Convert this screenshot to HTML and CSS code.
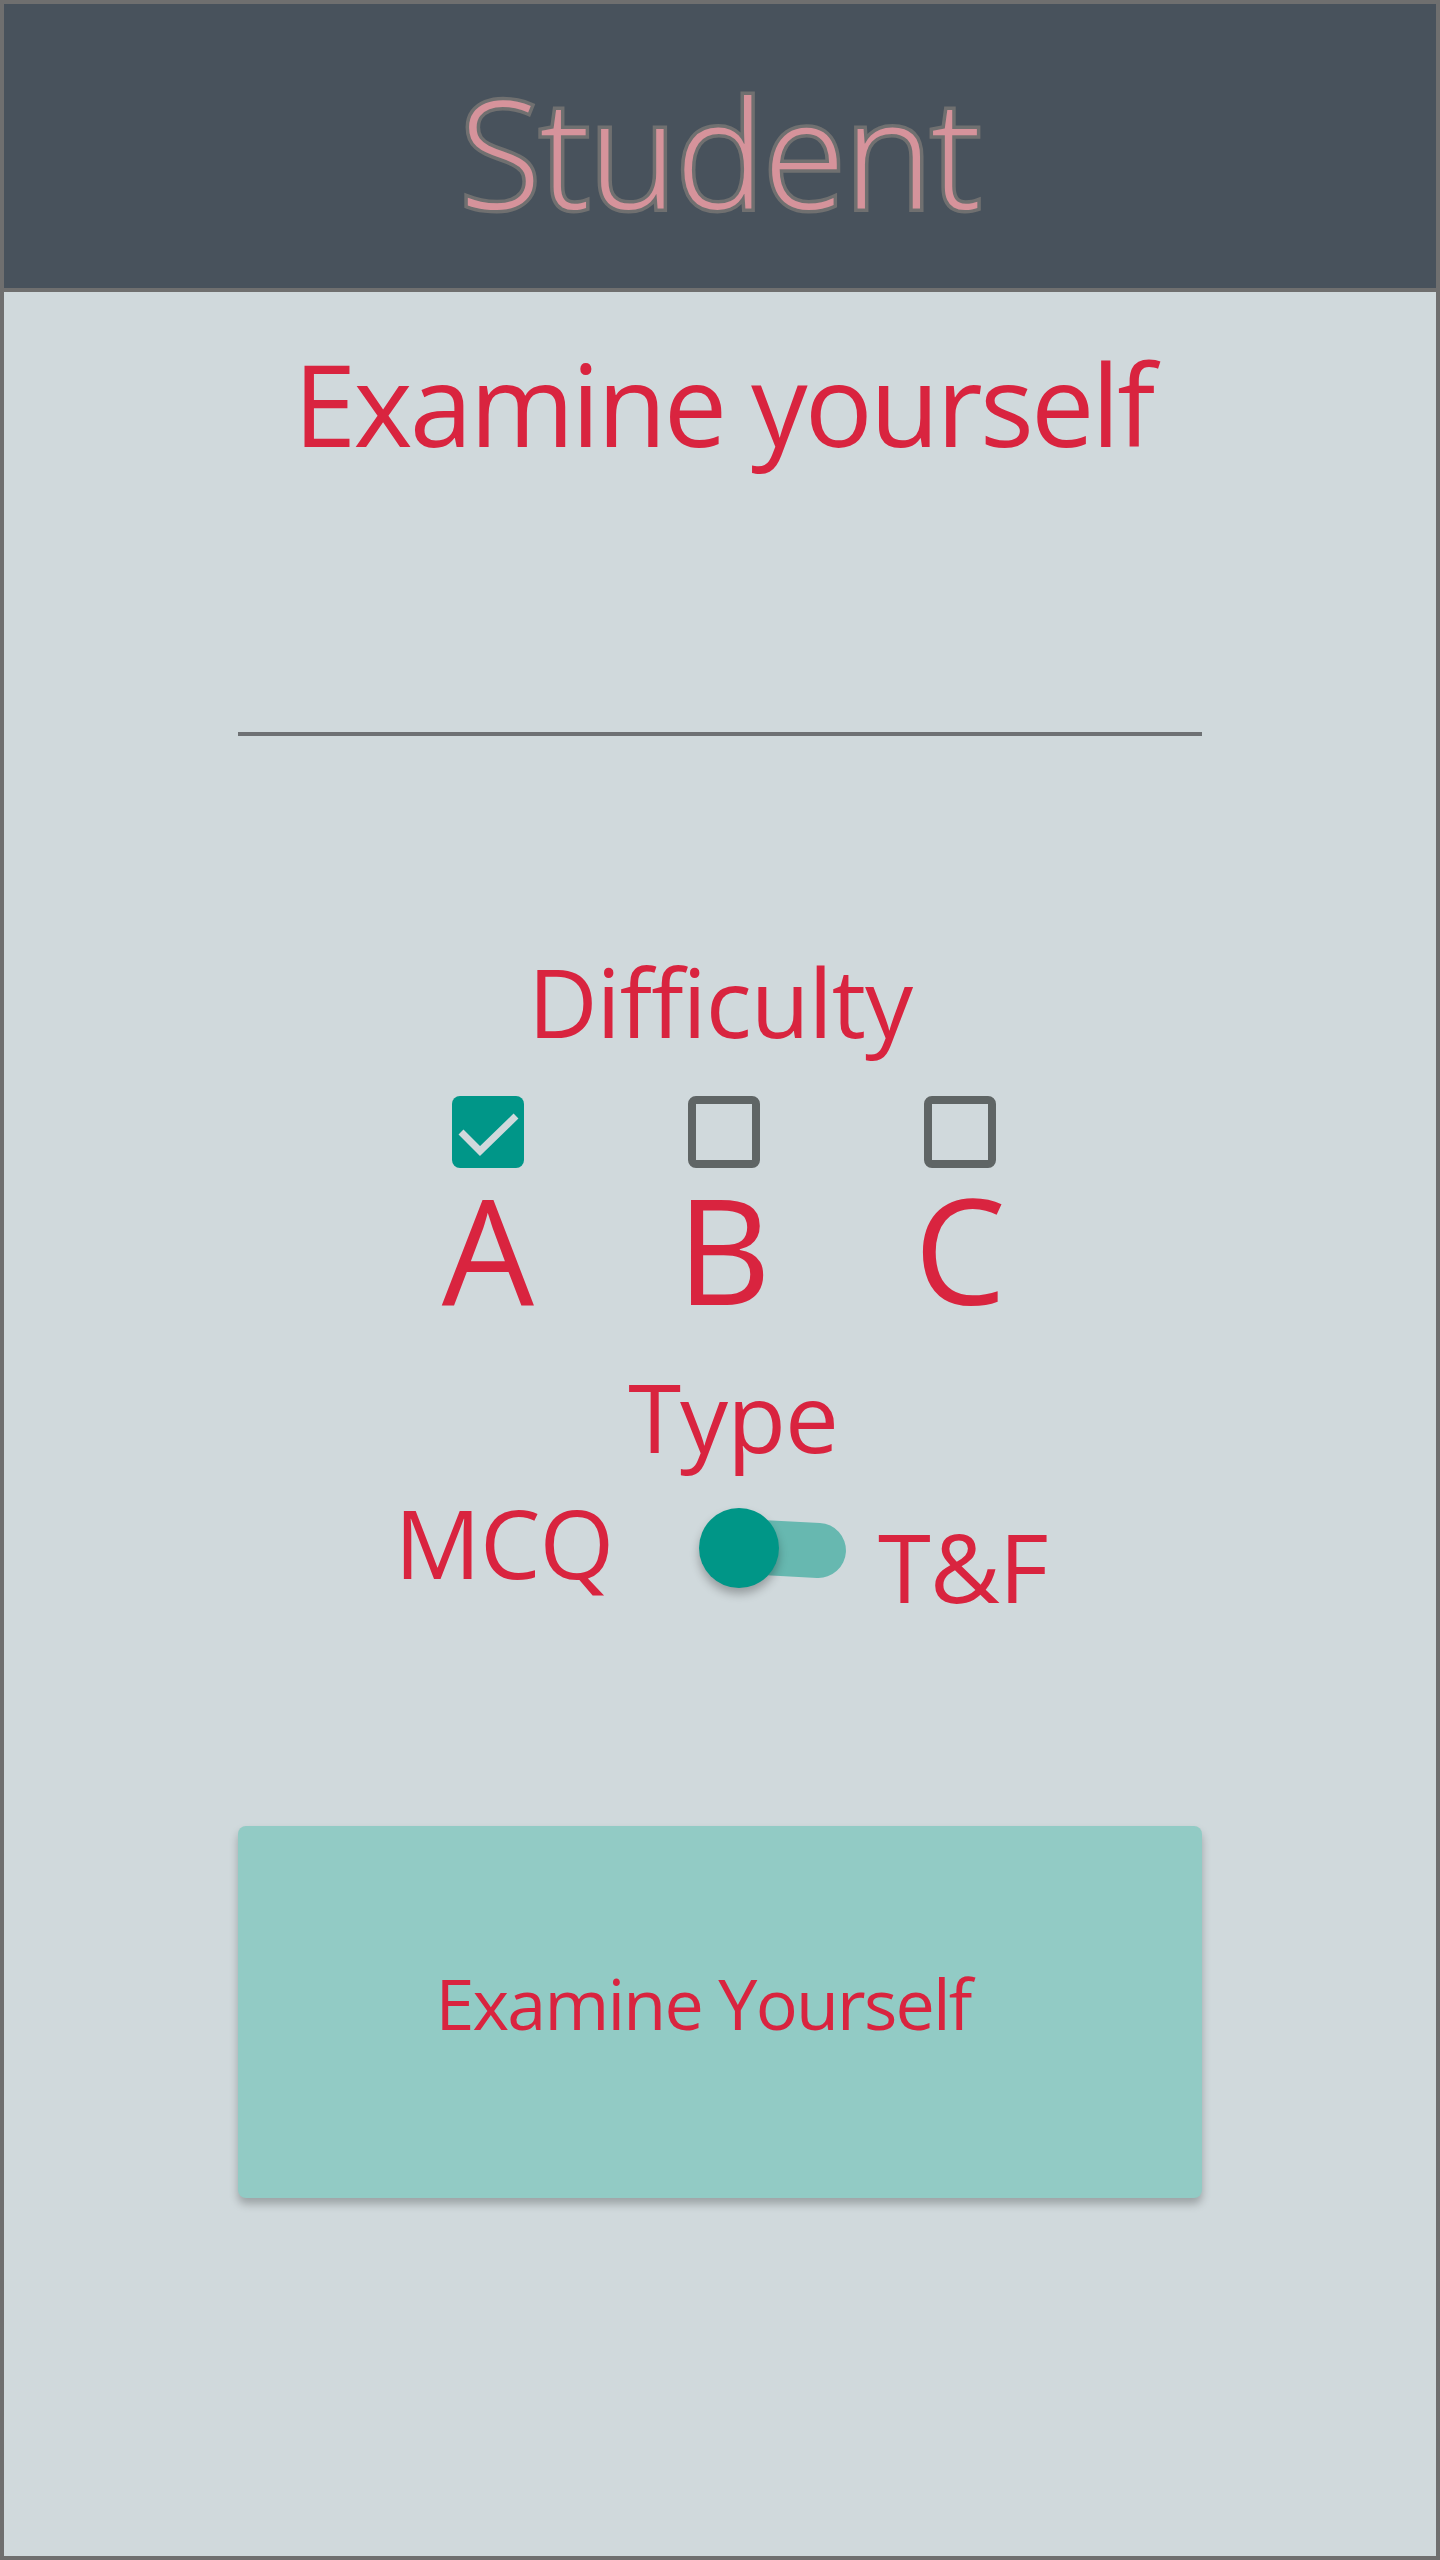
FILE: index.html
```html
<!DOCTYPE html>
<html lang="en">
<head>
<meta charset="utf-8">
<title>Student</title>
<link rel="stylesheet" href="styles.css">
</head>
<body>
<div class="frame">
  <header class="topbar">
    <h1 class="brand">Student</h1>
  </header>
  <main class="content">
    <h2 class="title">Examine yourself</h2>
    <div class="field-line"></div>
    <div class="label difficulty">Difficulty</div>
    <div class="options">
      <div class="option">
        <span class="box box-checked">
          <svg viewBox="0 0 72 72" width="72" height="72"><path d="M9 36 L28 55 L64 20" fill="none" stroke="#d0d9dc" stroke-width="7"/></svg>
        </span>
        <span class="letter">A</span>
      </div>
      <div class="option">
        <span class="box"></span>
        <span class="letter">B</span>
      </div>
      <div class="option">
        <span class="box"></span>
        <span class="letter">C</span>
      </div>
    </div>
    <div class="label type">Type</div>
    <div class="switch-row">
      <span class="switch-label mcq">MCQ</span>
      <span class="toggle">
        <span class="track"></span>
        <span class="knob"></span>
      </span>
      <span class="switch-label tf">T&amp;F</span>
    </div>
    <button class="action">Examine Yourself</button>
  </main>
</div>
</body>
</html>
```
FILE: styles.css
```css
html, body {
  margin: 0;
  padding: 0;
}
body {
  width: 1440px;
  height: 2560px;
  font-family: "Open Sans", "Noto Sans", sans-serif;
}
.frame {
  box-sizing: border-box;
  width: 1440px;
  height: 2560px;
  border: 4px solid #6f6f6f;
  background: #d0d9dc;
  display: flex;
  flex-direction: column;
}
.topbar {
  height: 274px;
  background: #48525c;
  border-bottom: 4px solid #6f6f6f;
  display: flex;
  align-items: center;
  justify-content: center;
  padding-top: 10px;
}
.brand {
  margin: 0;
  font-size: 149px;
  font-weight: 300;
  line-height: 1;
  letter-spacing: -1px;
  color: #d6939b;
  -webkit-text-stroke: 7px #707070;
  paint-order: stroke fill;
  text-shadow: -1px 2px 0 #707070;
}
.content {
  display: flex;
  flex-direction: column;
  align-items: center;
  color: #d9243f;
}
.title {
  margin: 55px 0 0;
  font-size: 113px;
  font-weight: 400;
  line-height: 1;
  letter-spacing: -2.8px;
  padding-left: 6px;
}
.field-line {
  margin-top: 272px;
  width: 964px;
  height: 4px;
  background: #6e7174;
}
.label {
  font-size: 96px;
  line-height: 1;
  letter-spacing: -1px;
}
.difficulty {
  margin-top: 217px;
}
.options {
  display: flex;
  gap: 76px;
  margin-top: 47px;
  margin-left: 8px;
}
.option {
  width: 160px;
  display: flex;
  flex-direction: column;
  align-items: center;
}
.box {
  box-sizing: border-box;
  width: 72px;
  height: 72px;
  border: 8px solid #5f6565;
  border-radius: 8px;
  display: block;
}
.box-checked {
  border: none;
  background: #009688;
}
.box-checked svg {
  display: block;
}
.letter {
  margin-top: 8px;
  font-size: 146px;
  line-height: 1;
}
.type {
  margin-top: 46px;
  padding-left: 26px;
}
.switch-row {
  margin-top: 30px;
  display: flex;
  align-items: flex-start;
  margin-left: 2px;
}
.switch-label {
  font-size: 96px;
  line-height: 1;
  letter-spacing: -1px;
}
.mcq {
  margin-right: 6px;
}
.tf {
  margin-top: 24px;
  margin-left: 32px;
}
.toggle {
  position: relative;
  display: block;
  width: 147px;
  height: 80px;
  margin-top: 14px;
  margin-left: 80px;
}
.track {
  position: absolute;
  left: 18px;
  top: 13px;
  width: 129px;
  height: 55px;
  border-radius: 28px;
  background: #67b8b0;
  transform: rotate(3deg);
}
.knob {
  position: absolute;
  left: 0;
  top: 0;
  width: 80px;
  height: 80px;
  border-radius: 50%;
  background: #009687;
  box-shadow: 0 6px 10px rgba(0, 0, 0, 0.28);
}
.action {
  margin-top: 212px;
  width: 964px;
  height: 372px;
  border: none;
  border-radius: 8px;
  background: #92cbc5;
  box-shadow: 0 6px 8px rgba(0, 0, 0, 0.25);
  color: #d9243f;
  font-family: "Open Sans", "Noto Sans", sans-serif;
  font-size: 70px;
  line-height: 1;
  letter-spacing: -1.8px;
  padding: 0 34px 18px 0;
  display: flex;
  align-items: center;
  justify-content: center;
}
```
